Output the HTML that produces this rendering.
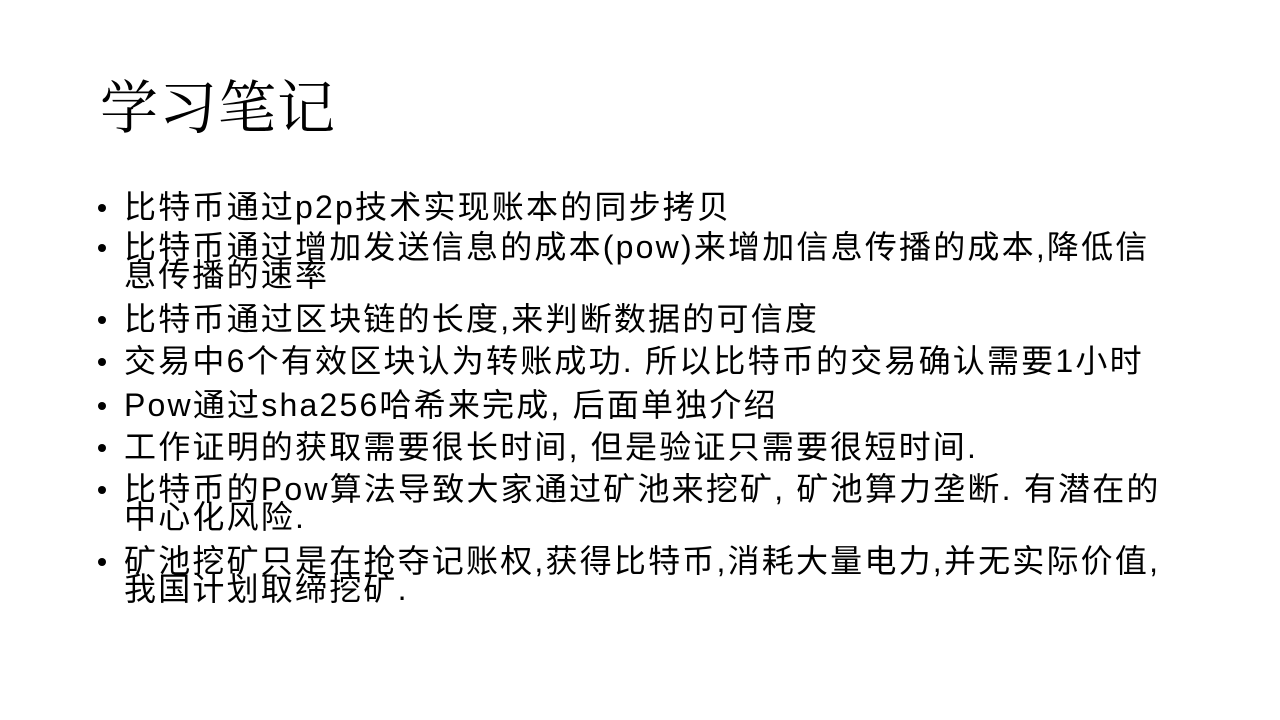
<!DOCTYPE html>
<html><head><meta charset="utf-8"><style>
html,body{margin:0;padding:0;background:#fff;}
body{width:1280px;height:720px;position:relative;overflow:hidden;font-family:"Liberation Sans","Noto Sans CJK SC",sans-serif;color:#000;}
.t{position:absolute;left:100px;top:76px;font-size:58px;line-height:66px;font-family:"Liberation Serif","Noto Serif CJK SC",serif;white-space:nowrap;letter-spacing:1px;}
.l{position:absolute;left:124px;font-size:32px;line-height:32px;white-space:nowrap;letter-spacing:2.2px;}
.b{position:absolute;left:98px;width:8px;height:8px;border-radius:50%;background:#000;}
</style></head><body>
<div class="t">学习笔记</div>
<div class="b" style="top:204px"></div><div class="l" style="top:191px">比特币通过p2p技术实现账本的同步拷贝</div>
<div class="b" style="top:244px"></div><div class="l" style="top:231px">比特币通过增加发送信息的成本(pow)来增加信息传播的成本,降低信</div>
<div class="l" style="top:259px">息传播的速率</div>
<div class="b" style="top:316px"></div><div class="l" style="top:303px">比特币通过区块链的长度,来判断数据的可信度</div>
<div class="b" style="top:358px"></div><div class="l" style="top:345px">交易中6个有效区块认为转账成功. 所以比特币的交易确认需要1小时</div>
<div class="b" style="top:402px"></div><div class="l" style="top:389px">Pow通过sha256哈希来完成, 后面单独介绍</div>
<div class="b" style="top:444px"></div><div class="l" style="top:431px">工作证明的获取需要很长时间, 但是验证只需要很短时间.</div>
<div class="b" style="top:486px"></div><div class="l" style="top:473px">比特币的Pow算法导致大家通过矿池来挖矿, 矿池算力垄断. 有潜在的</div>
<div class="l" style="top:501px">中心化风险.</div>
<div class="b" style="top:558px"></div><div class="l" style="top:545px">矿池挖矿只是在抢夺记账权,获得比特币,消耗大量电力,并无实际价值,</div>
<div class="l" style="top:573px">我国计划取缔挖矿.</div>
</body></html>
